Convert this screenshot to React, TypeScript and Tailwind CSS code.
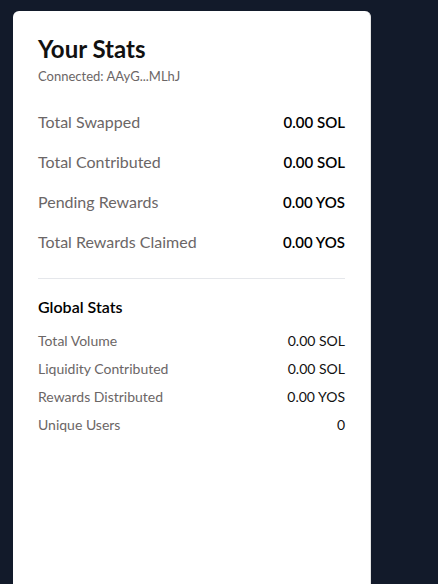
import React from "react";

const mainStats = [
  ["Total Swapped", "0.00 SOL"],
  ["Total Contributed", "0.00 SOL"],
  ["Pending Rewards", "0.00 YOS"],
  ["Total Rewards Claimed", "0.00 YOS"],
];

const globalStats = [
  ["Total Volume", "0.00 SOL"],
  ["Liquidity Contributed", "0.00 SOL"],
  ["Rewards Distributed", "0.00 YOS"],
  ["Unique Users", "0"],
];

export default function App() {
  return (
    <div
      className="min-h-screen bg-[#121a2a] pl-[13px] pt-[11px] overflow-hidden"
      style={{ height: 584 }}
    >
      <div
        className="w-[358px] h-[600px] bg-white rounded-md border-r border-[#e5e5e5] px-[25px] pt-[22px]"
        style={{ fontFamily: "Lato, 'Open Sans', sans-serif" }}
      >
        <h2 className="text-2xl font-bold text-[#111] leading-8">Your Stats</h2>
        <p className="text-[13px] text-[#6b6666] leading-5 mt-[1px]">Connected: AAyG...MLhJ</p>

        <div className="mt-[24px] flex flex-col gap-4">
          {mainStats.map(([l, v]) => (
            <div key={l} className="flex justify-between items-center leading-6">
              <span className="text-base text-[#6b6666]">{l}</span>
              <span className="text-[15px] font-semibold text-black">{v}</span>
            </div>
          ))}
        </div>

        <div className="mt-[24px] border-t border-[#e5e7eb]" />

        <h3 className="mt-[16px] text-base font-semibold text-black leading-6">Global Stats</h3>
        <div className="mt-[12px] flex flex-col gap-2">
          {globalStats.map(([l, v]) => (
            <div key={l} className="flex justify-between items-center text-sm leading-5">
              <span className="text-[#6b6666]">{l}</span>
              <span className="text-[#111]">{v}</span>
            </div>
          ))}
        </div>
      </div>
    </div>
  );
}
